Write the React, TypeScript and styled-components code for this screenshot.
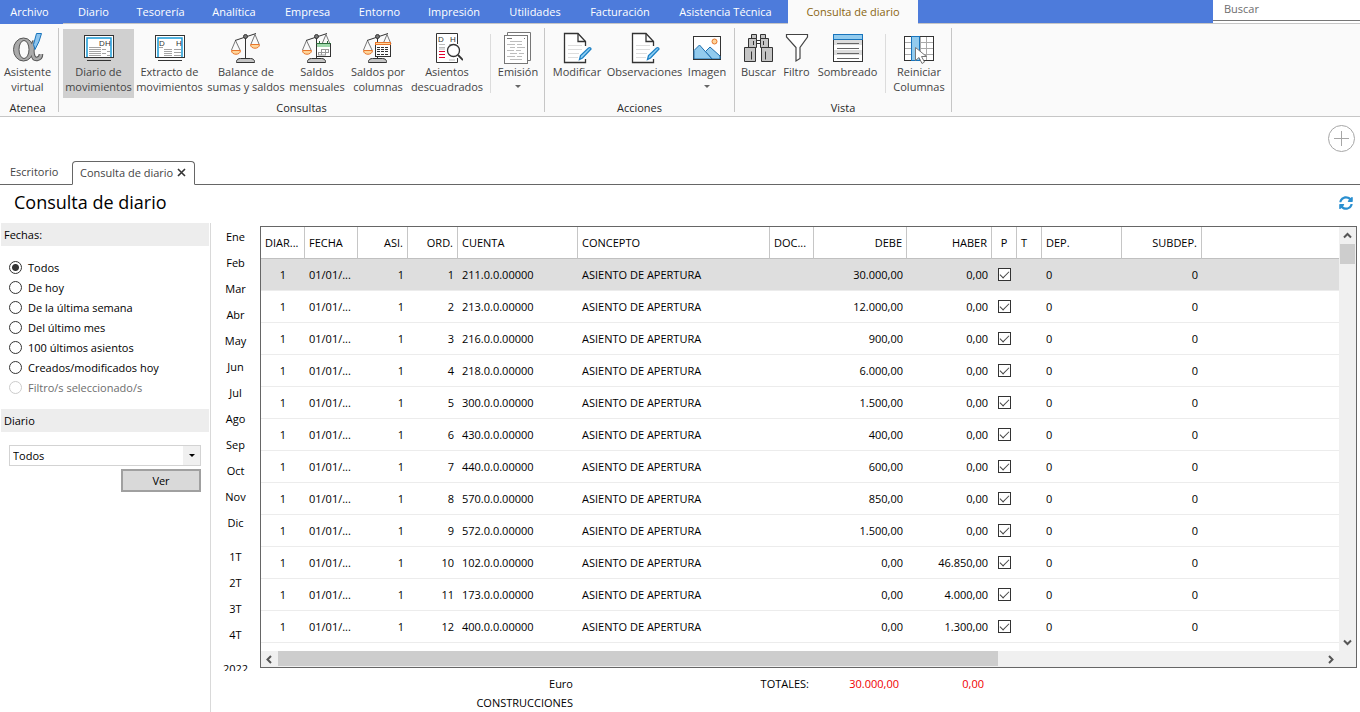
import React, { useState } from "react";
import styled, { createGlobalStyle, css } from "styled-components";
import { FaSyncAlt } from "react-icons/fa";

const GlobalStyle = createGlobalStyle`
  * { box-sizing: border-box; }
  body {
    margin: 0;
    background: #fff;
    color: #000;
    font: 11px/15px "Open Sans", "Noto Sans", sans-serif;
  }
  button, input, select { font: inherit; color: inherit; margin: 0; }
  button { background: none; border: 0; padding: 0; cursor: pointer; }
`;

const Page = styled.div`
  display: flex;
  flex-direction: column;
  height: 100vh;
  overflow: hidden;
`;

/* ---------- Menu bar ---------- */

const MenuBar = styled.nav`
  display: flex;
  flex: none;
  height: 24px;
  background: #4d7bdb;
`;

const MenuItem = styled.button<{ $width: number; $tone?: "file" | "active" }>`
  flex: none;
  width: ${(p) => p.$width}px;
  color: #fff;
  border-bottom: 1px solid #c6c6c6;
  ${(p) =>
    p.$tone === "file" &&
    css`
      padding-right: 4px;
      border-bottom-color: #4d7bdb;
    `}
  ${(p) =>
    p.$tone === "active" &&
    css`
      background: #fafafa;
      border-bottom-color: #fafafa;
      color: #8a6510;
    `}
`;

const MenuFill = styled.div`
  flex: 1;
  border-bottom: 1px solid #c6c6c6;
`;

const SearchBox = styled.div`
  width: 147px;
  background: #fff;
  border-bottom: 1px solid #c6c6c6;
`;

const SearchInput = styled.input`
  display: block;
  width: 100%;
  height: 21px;
  padding: 0 11px 3px;
  border: 0;
  border-bottom: 1px solid #777;
  outline: 0;
  background: #fff;
  &::placeholder { color: #6d6d6d; opacity: 1; }
`;

/* ---------- Ribbon ---------- */

const Ribbon = styled.div`
  display: flex;
  flex: none;
  height: 93px;
  background: #fafafa;
  border-bottom: 1px solid #c6c6c6;
`;

const Group = styled.section<{ $first?: boolean }>`
  display: flex;
  flex-direction: column;
  padding: ${(p) => (p.$first ? "5px 3px 0 0" : "5px 4px 0")};
`;

const GroupButtons = styled.div`
  display: flex;
  height: 69px;
`;

const GroupLabel = styled.div`
  margin-top: 2px;
  text-align: center;
  color: #262626;
`;

const GroupDivider = styled.div`
  width: 1px;
  margin: 4px 0;
  background: #c6c6c6;
`;

const Separator = styled.div`
  width: 1px;
  margin: 5px 5px;
  background: #dcdcdc;
`;

const ToolButton = styled.button<{ $width: number; $selected?: boolean }>`
  display: flex;
  flex-direction: column;
  align-items: center;
  flex: none;
  width: ${(p) => p.$width}px;
  padding-top: 3px;
  color: #444;
  background: ${(p) => (p.$selected ? "#d0d0d0" : "transparent")};
`;

const ToolText = styled.span`
  white-space: pre;
  text-align: center;
`;

const Caret = styled.span`
  margin-top: 6px;
  border: 3px solid transparent;
  border-top-color: #666;
  border-bottom: 0;
`;

/* ---------- Document tabs ---------- */

const QuickArea = styled.div`
  display: flex;
  flex: none;
  justify-content: flex-end;
  height: 44px;
  padding: 8px 5px 0;
`;

const AddButton = styled.button`
  display: block;
  width: 27px;
  height: 27px;
`;

const DocTabs = styled.div`
  display: flex;
  flex: none;
  height: 24px;
`;

const DocTab = styled.button<{ $active?: boolean }>`
  display: flex;
  align-items: center;
  gap: 4px;
  flex: none;
  width: ${(p) => (p.$active ? 123 : 72)}px;
  padding: 0 0 2px ${(p) => (p.$active ? 7 : 10)}px;
  color: #444;
  border-bottom: 1px solid #666;
  ${(p) =>
    p.$active &&
    css`
      border: 1px solid #666;
      border-bottom-color: #fff;
      border-radius: 4px 4px 0 0;
    `}
`;

const DocTabsFill = styled.div`
  flex: 1;
  border-bottom: 1px solid #666;
`;

const TitleRow = styled.header`
  display: flex;
  flex: none;
  align-items: center;
  justify-content: space-between;
  height: 38px;
  padding: 0 7px 2px 14px;
`;

const Title = styled.h1`
  margin: 0;
  padding-bottom: 2px;
  font-size: 18px;
  line-height: 24px;
  font-weight: 400;
`;

const RefreshButton = styled.button`
  display: block;
  height: 14px;
  color: #2a8fd0;
  svg { display: block; }
`;

/* ---------- Body ---------- */

const Body = styled.div`
  display: flex;
  flex: 1;
  min-height: 0;
`;

const Sidebar = styled.aside`
  flex: none;
  width: 211px;
  padding: 0 1px;
  border-right: 1px solid #d9d9d9;
`;

const SideHeading = styled.h2`
  margin: 0;
  height: 23px;
  padding: 0 3px;
  background: #ededed;
  font-size: 11px;
  line-height: 23px;
  font-weight: 400;
`;

const RadioList = styled.div`
  display: flex;
  flex-direction: column;
  padding: 11px 8px 12px;
`;

const RadioLabel = styled.label<{ $disabled?: boolean }>`
  display: flex;
  align-items: center;
  gap: 6px;
  height: 20px;
  color: ${(p) => (p.$disabled ? "#6d6d6d" : "#000")};
`;

const Radio = styled.input`
  appearance: none;
  width: 13px;
  height: 13px;
  border: 1px solid #333;
  border-radius: 50%;
  background: #fff;
  &:checked { background: radial-gradient(circle, #333 3px, #fff 4px); }
  &:disabled { border-color: #ccc; }
`;

const JournalForm = styled.div`
  display: flex;
  flex-direction: column;
  gap: 3px;
  padding: 13px 8px;
`;

const SelectBox = styled.div`
  display: grid;
  grid-template-columns: 1fr 17px;
  align-items: stretch;
  height: 21px;
  border: 1px solid #d3d3d3;
`;

const Select = styled.select`
  grid-area: 1 / 1 / 2 / 3;
  appearance: none;
  padding: 0 3px;
  border: 0;
  border-radius: 0;
  background: transparent;
`;

const SelectArrow = styled.span`
  grid-area: 1 / 2;
  display: flex;
  align-items: center;
  justify-content: center;
  background: #f0f0f0;
  pointer-events: none;
  &::after {
    content: "";
    border: 3px solid transparent;
    border-top-color: #000;
    border-bottom: 0;
  }
`;

const ViewButton = styled.button`
  align-self: flex-end;
  width: 80px;
  height: 23px;
  background: #d9d9d9;
  border: 2px solid #a0a0a0;
`;

const Main = styled.main`
  display: flex;
  flex-direction: column;
  flex: 1;
  min-width: 0;
`;

const Workspace = styled.div`
  display: flex;
  flex: 1;
  min-height: 0;
`;

const Periods = styled.nav`
  display: flex;
  flex-direction: column;
  gap: 8px;
  flex: none;
  width: 49px;
  overflow: hidden;
`;

const PeriodGroup = styled.div`
  display: flex;
  flex-direction: column;
  flex: none;
`;

const Period = styled.button`
  height: 26px;
`;

const GridFrame = styled.div`
  display: grid;
  grid-template-columns: minmax(0, 1fr) 17px;
  grid-template-rows: minmax(0, 1fr) 16px;
  flex: 1;
  min-width: 0;
  margin: 3px 3px 3px 0;
  border: 1px solid #666;
`;

const GridView = styled.div`
  overflow: hidden;
`;

const Table = styled.table`
  width: 100%;
  table-layout: fixed;
  border-collapse: separate;
  border-spacing: 0;
`;

type Align = "left" | "right" | "center";

const cell = css<{ $align?: Align }>`
  height: 32px;
  padding: 0 4px;
  overflow: hidden;
  white-space: nowrap;
  text-align: ${(p) => p.$align ?? "left"};
  font-weight: 400;
`;

const Th = styled.th<{ $align?: Align }>`
  ${cell}
  border-bottom: 1px solid #c0c0c0;
  border-right: 1px solid #c6c6c6;
  &:last-child { border-right: 0; }
`;

const Td = styled.td<{ $align?: Align }>`
  ${cell}
  border-bottom: 1px solid #ececec;
`;

const Row = styled.tr<{ $selected?: boolean }>`
  background: ${(p) => (p.$selected ? "#dedede" : "#fff")};
`;

const Tick = styled.input`
  appearance: none;
  display: block;
  width: 13px;
  height: 13px;
  margin: 0 auto;
  border: 1px solid #333;
  background: #fff;
  &:checked::after {
    content: "";
    display: block;
    width: 8px;
    height: 4px;
    margin: 2px 1px;
    border: solid #444;
    border-width: 0 0 1px 1px;
    transform: rotate(-45deg);
  }
`;

const VScroll = styled.div`
  grid-area: 1 / 2 / 3 / 3;
  display: flex;
  flex-direction: column;
  padding-bottom: 16px;
  background: #f0f0f0;
`;

const HScroll = styled.div`
  grid-area: 2 / 1;
  display: flex;
  background: #f0f0f0;
`;

const ScrollButton = styled.button`
  display: flex;
  align-items: center;
  justify-content: center;
  flex: none;
  width: 17px;
  height: 17px;
`;

const VThumb = styled.div`
  height: 20px;
  margin: 0 1px;
  background: #cdcdcd;
`;

const Track = styled.div`
  flex: 1;
`;

const HThumb = styled.div`
  width: 69%;
  height: 15px;
  background: #cdcdcd;
`;

const Footer = styled.footer`
  display: grid;
  grid-template-columns: 362px 236px 90px 85px;
  grid-auto-rows: 19px;
  align-content: start;
  flex: none;
  height: 41px;
  padding-top: 5px;
  text-align: right;
`;

const Amount = styled.output`
  color: #f00000;
`;

/* ---------- Icons ---------- */

const Icon = ({ children }: { children: React.ReactNode }) => (
  <svg width="32" height="32" viewBox="0 0 32 32" fill="none" aria-hidden="true">
    {children}
  </svg>
);

const AlphaIcon = () => {
  const stem = "M22.500 9C18.500 19 20.500 27.500 25 27C27.500 26.500 29 24.500 29 22";
  return (
    <Icon>
      <path d={stem} stroke="#555" strokeWidth="4.600" />
      <ellipse cx="11.500" cy="17.500" rx="10" ry="11.500" fill="#aaa" stroke="#555" />
      <ellipse cx="12" cy="17.500" rx="5" ry="9" fill="#fafafa" stroke="#555" />
      <path d={stem} stroke="#aaa" strokeWidth="2.600" />
      <path d="M24.500 1.500h5L27 9.500l-4 8-1.500-5z" fill="#8cc4ee" stroke="#1874bc" />
    </Icon>
  );
};

const LedgerIcon = ({ split }: { split?: boolean }) => (
  <Icon>
    <rect x="1.500" y="3.500" width="29" height="22" fill="#fff" stroke="#333" />
    <path d="M4 25V6h24v19" stroke="#1a9ad6" strokeWidth="1.500" />
    <text x={split ? 5 : 16} y="14" fontSize="8" fontFamily="Liberation Sans, sans-serif" fill="#333">D</text>
    <text x="22" y="14" fontSize="8" fontFamily="Liberation Sans, sans-serif" fill="#333">H</text>
    <path
      d={split
        ? "M5 15.500h4M10 17.500h8M10 19.500h8M10 21.500h8M10 23.500h8M20 17.500h7M20 20.500h7M20 23.500h7"
        : "M6 15.500h12M6 17.500h12M6 19.500h12M6 21.500h12M6 23.500h12M19 17.500h4M24 19.500h3M19 21.500h4M24 23.500h3"}
      stroke="#a3a3a3"
    />
    <path d="M4 28.500h24" stroke="#333" />
  </Icon>
);

const ScaleBase = ({ rightPan }: { rightPan?: boolean }) => (
  <>
    <path d="M5.500 8.500L1.500 18M5.500 8.500L10 18M25 2.500L21 12M25 2.500L29 12" stroke="#777" />
    <path d="M5 8.500L26 1.500M15.500 5v21" stroke="#333" />
    <circle cx="15.500" cy="4.500" r="2" fill="#777" stroke="#333" />
    <path d="M1.500 18.500h9c0 5-9 5-9 0z" fill="#ffd59a" stroke="#e8762c" />
    {rightPan && <path d="M20.500 12.500h9c0 5-9 5-9 0z" fill="#ffd59a" stroke="#e8762c" />}
    <path d="M6.500 30.500v-1c0-2 2-3 4-3h10c2 0 4 1 4 3v1z" fill="#c4c4c4" stroke="#333" />
  </>
);

const BalanceIcon = () => <Icon><ScaleBase rightPan /></Icon>;

const MonthlyIcon = () => (
  <Icon>
    <ScaleBase />
    <rect x="15.500" y="11.500" width="14" height="13" fill="#fff" stroke="#333" />
    <rect x="16" y="12" width="13" height="3" fill="#9fd8ab" />
    <path d="M15 11.500h15M18.500 9v3M26.500 9v3" stroke="#2d6b3c" />
    <path d="M20 17.500h8M17 20.500h11M17 23h8M17.500 20v3M20.500 17v6M24.500 17v6M27.500 17v4" stroke="#999" />
  </Icon>
);

const ColumnsBalanceIcon = () => (
  <Icon>
    <ScaleBase />
    <rect x="13.500" y="12.500" width="15" height="12" fill="#fff" stroke="#333" />
    <rect x="13.500" y="10.500" width="15" height="2" fill="#ffd59a" stroke="#e8762c" />
    <path d="M15 15.500h12M15 17.500h12M15 19.500h12M15 22.500h12" stroke="#333" strokeDasharray="3 1" />
  </Icon>
);

const UnbalancedIcon = () => (
  <Icon>
    <path d="M26.500 12V1.500h-21v29h21V26" fill="#fff" stroke="#333" />
    <text x="7" y="10" fontSize="8" fontFamily="Liberation Sans, sans-serif" fill="#333">D</text>
    <text x="19" y="10" fontSize="8" fontFamily="Liberation Sans, sans-serif" fill="#333">H</text>
    <path d="M8 12.500h6M8 15.500h6M8 17h6M18 12.500h6M18 28h6" stroke="#bbb" />
    <path d="M8 19.500h6M8 22.500h6M8 25.500h6" stroke="#e2002d" />
    <circle cx="22.500" cy="18.500" r="6" fill="#fff" stroke="#333" strokeWidth="1.300" />
    <path d="M27 23l5 5" stroke="#333" strokeWidth="1.800" />
  </Icon>
);

const EmissionIcon = () => (
  <Icon>
    <path d="M5.500 3V.500h23v28H26" fill="#fff" stroke="#777" />
    <rect x="2.500" y="3.500" width="23" height="28" fill="#fff" stroke="#777" />
    <path d="M5 6.500h5M22 6.500h1" stroke="#777" />
    <path d="M8 9.500h12M5 12.500h8M15 12.500h5M8 15.500h5M15 15.500h8M5 18.500h7M14 18.500h5M8 21.500h7M17 21.500h5M5 24.500h8M15 24.500h5M8 27.500h12" stroke="#bdbdbd" />
  </Icon>
);

const EditIcon = () => (
  <Icon>
    <path d="M24.500 14V9.500L17 1.500H3.500v29h21V27" fill="#fff" stroke="#333" strokeWidth="1.300" />
    <path d="M17 1.500v8h7.500" stroke="#333" strokeWidth="1.300" />
    <path d="M7 13.500h14M7 17.500h14M7 21.500h11M7 25.500h10" stroke="#ddd" />
    <path d="M18.500 27.500l1-4L27.500 16q2-1 2.500 1l-8.500 9z" fill="#8fd0f5" stroke="#1d80c4" strokeWidth="1.300" />
  </Icon>
);

const ImageIcon = () => (
  <Icon>
    <rect x="2.500" y="4.500" width="27" height="23" fill="#fff" stroke="#333" />
    <circle cx="23.500" cy="9.500" r="2.500" fill="#ffd59a" stroke="#e8762c" />
    <path d="M14.500 19.500l4.500-4.500 10 9v3H21z" fill="#92cbee" stroke="#1f6fae" />
    <path d="M3 18.500l5.500-5.500L21 27H3z" fill="#92cbee" stroke="#1f6fae" />
    <path d="M2 27.500h28" stroke="#333" />
  </Icon>
);

const BinocularsIcon = () => (
  <Icon>
    <path d="M8.500 2.500h5v4h-5zM17.500 2.500h5v4h-5z" fill="#c4c4c4" stroke="#333" />
    <path d="M12 8.500h7v3h-7z" fill="#fff" stroke="#333" />
    <path d="M5.500 6.500h8v9h-8zM17.500 6.500h8v9h-8z" fill="#c4c4c4" stroke="#333" />
    <path d="M1.500 15.500h11v14h-11zM18.500 15.500h11v14h-11z" fill="#c4c4c4" stroke="#333" />
    <path d="M10.500 9v4M20.500 9v4M8.500 19.500v8M22.500 19.500v8" stroke="#333" />
  </Icon>
);

const FunnelIcon = () => (
  <Icon>
    <path d="M5.500 2.500h21V5l-7.500 10.500v11l-4 2.500V15.500L5.500 5z" fill="#fff" stroke="#444" strokeWidth="1.200" />
  </Icon>
);

const ShadingIcon = () => (
  <Icon>
    <rect x="1.500" y="2.500" width="29" height="27" fill="#fff" stroke="#333" />
    <path d="M2 8h28v5H2zM2 18h28v5H2z" fill="#ddd" />
    <rect x="1.500" y="2.500" width="29" height="5" fill="#92cbee" stroke="#1874bc" />
    <path d="M5 11.500h22M5 16.500h22M5 21.500h22M5 26.500h22" stroke="#666" />
  </Icon>
);

const ResetColumnsIcon = () => (
  <Icon>
    <rect x="1.500" y="4.500" width="29" height="24" fill="#fff" stroke="#333" />
    <path d="M2 10.500h28M2 16.500h28M2 22.500h28M17.500 5v23M23.500 5v23" stroke="#aaa" />
    <rect x="8.500" y="4.500" width="8" height="24" fill="#92cbee" stroke="#1874bc" />
    <path d="M12.500 15.500v13l3.500-3 3 6 2.500-1.500-3-5.500h5z" fill="#fff" stroke="#777" />
  </Icon>
);

const Chevron = ({ d }: { d: string }) => (
  <svg width="9" height="9" viewBox="0 0 9 9" fill="none" aria-hidden="true">
    <path d={d} stroke="#555" strokeWidth="2" />
  </svg>
);

/* ---------- Data ---------- */

const menus: [string, number][] = [
  ["Diario", 61], ["Tesorería", 73], ["Analítica", 74], ["Empresa", 73],
  ["Entorno", 71], ["Impresión", 78], ["Utilidades", 84], ["Facturación", 86],
  ["Asistencia Técnica", 125],
];

const dateFilters = [
  "Todos", "De hoy", "De la última semana", "Del último mes",
  "100 últimos asientos", "Creados/modificados hoy", "Filtro/s seleccionado/s",
];

const periods = [
  ["Ene", "Feb", "Mar", "Abr", "May", "Jun", "Jul", "Ago", "Sep", "Oct", "Nov", "Dic"],
  ["1T", "2T", "3T", "4T"],
  ["2022"],
];

const columns: { label: string; width?: number; align?: Align }[] = [
  { label: "DIAR...", width: 44 },
  { label: "FECHA", width: 53 },
  { label: "ASI.", width: 50, align: "right" },
  { label: "ORD.", width: 50, align: "right" },
  { label: "CUENTA", width: 120 },
  { label: "CONCEPTO", width: 192 },
  { label: "DOC...", width: 44 },
  { label: "DEBE", width: 93, align: "right" },
  { label: "HABER", width: 85, align: "right" },
  { label: "P", width: 25, align: "center" },
  { label: "T", width: 25 },
  { label: "DEP.", width: 80 },
  { label: "SUBDEP.", width: 80, align: "right" },
  { label: "" },
];

const entries: [string, string, string][] = [
  ["211.0.0.00000", "30.000,00", "0,00"],
  ["213.0.0.00000", "12.000,00", "0,00"],
  ["216.0.0.00000", "900,00", "0,00"],
  ["218.0.0.00000", "6.000,00", "0,00"],
  ["300.0.0.00000", "1.500,00", "0,00"],
  ["430.0.0.00000", "400,00", "0,00"],
  ["440.0.0.00000", "600,00", "0,00"],
  ["570.0.0.00000", "850,00", "0,00"],
  ["572.0.0.00000", "1.500,00", "0,00"],
  ["102.0.0.00000", "0,00", "46.850,00"],
  ["173.0.0.00000", "0,00", "4.000,00"],
  ["400.0.0.00000", "0,00", "1.300,00"],
];

type ToolProps = {
  icon: React.ReactNode;
  label: string;
  width: number;
  selected?: boolean;
  menu?: boolean;
};

const Tool = ({ icon, label, width, selected, menu }: ToolProps) => (
  <ToolButton type="button" $width={width} $selected={selected}>
    {icon}
    <ToolText>{label}</ToolText>
    {menu && <Caret />}
  </ToolButton>
);

export default function App() {
  const [filter, setFilter] = useState(0);
  const [selected, setSelected] = useState(0);

  return (
    <Page>
      <GlobalStyle />
      <MenuBar>
        <MenuItem type="button" $width={63} $tone="file">Archivo</MenuItem>
        {menus.map(([label, width]) => (
          <MenuItem type="button" key={label} $width={width}>{label}</MenuItem>
        ))}
        <MenuItem type="button" $width={130} $tone="active">Consulta de diario</MenuItem>
        <MenuFill />
        <SearchBox>
          <SearchInput type="text" placeholder="Buscar" aria-label="Buscar" />
        </SearchBox>
      </MenuBar>

      <Ribbon>
        <Group $first>
          <GroupButtons>
            <Tool icon={<AlphaIcon />} label={"Asistente\nvirtual"} width={55} />
          </GroupButtons>
          <GroupLabel>Atenea</GroupLabel>
        </Group>
        <GroupDivider />
        <Group>
          <GroupButtons>
            <Tool icon={<LedgerIcon />} label={"Diario de\nmovimientos"} width={71} selected />
            <Tool icon={<LedgerIcon split />} label={"Extracto de\nmovimientos"} width={71} />
            <Tool icon={<BalanceIcon />} label={"Balance de\nsumas y saldos"} width={82} />
            <Tool icon={<MonthlyIcon />} label={"Saldos\nmensuales"} width={60} />
            <Tool icon={<ColumnsBalanceIcon />} label={"Saldos por\ncolumnas"} width={62} />
            <Tool icon={<UnbalancedIcon />} label={"Asientos\ndescuadrados"} width={76} />
            <Separator />
            <Tool icon={<EmissionIcon />} label="Emisión" width={44} menu />
          </GroupButtons>
          <GroupLabel>Consultas</GroupLabel>
        </Group>
        <GroupDivider />
        <Group>
          <GroupButtons>
            <Tool icon={<EditIcon />} label="Modificar" width={56} />
            <Tool icon={<EditIcon />} label="Observaciones" width={79} />
            <Tool icon={<ImageIcon />} label="Imagen" width={46} menu />
          </GroupButtons>
          <GroupLabel>Acciones</GroupLabel>
        </Group>
        <GroupDivider />
        <Group>
          <GroupButtons>
            <Tool icon={<BinocularsIcon />} label="Buscar" width={39} />
            <Tool icon={<FunnelIcon />} label="Filtro" width={37} />
            <Tool icon={<ShadingIcon />} label="Sombreado" width={65} />
            <Separator />
            <Tool icon={<ResetColumnsIcon />} label={"Reiniciar\nColumnas"} width={56} />
          </GroupButtons>
          <GroupLabel>Vista</GroupLabel>
        </Group>
        <GroupDivider />
      </Ribbon>

      <QuickArea>
        <AddButton type="button" aria-label="Añadir">
          <svg width="27" height="27" viewBox="0 0 27 27" fill="none" stroke="#a6a6a6">
            <circle cx="13.500" cy="13.500" r="13" />
            <path d="M13.500 6v15M6 13.500h15" />
          </svg>
        </AddButton>
      </QuickArea>

      <DocTabs>
        <DocTab type="button">Escritorio</DocTab>
        <DocTab type="button" $active>
          Consulta de diario
          <svg width="9" height="9" viewBox="0 0 9 9" aria-hidden="true">
            <path d="M1 1l7 7M8 1l-7 7" stroke="#333" strokeWidth="1.600" />
          </svg>
        </DocTab>
        <DocTabsFill />
      </DocTabs>

      <TitleRow>
        <Title>Consulta de diario</Title>
        <RefreshButton type="button" aria-label="Actualizar">
          <FaSyncAlt size={14} />
        </RefreshButton>
      </TitleRow>

      <Body>
        <Sidebar>
          <SideHeading>Fechas:</SideHeading>
          <RadioList role="radiogroup" aria-label="Fechas">
            {dateFilters.map((label, i) => {
              const disabled = i === dateFilters.length - 1;
              return (
                <RadioLabel key={label} $disabled={disabled}>
                  <Radio
                    type="radio"
                    name="fechas"
                    checked={filter === i}
                    disabled={disabled}
                    onChange={() => setFilter(i)}
                  />
                  {label}
                </RadioLabel>
              );
            })}
          </RadioList>
          <SideHeading>
            <label htmlFor="diario">Diario</label>
          </SideHeading>
          <JournalForm>
            <SelectBox>
              <SelectArrow />
              <Select id="diario" defaultValue="Todos">
                <option>Todos</option>
              </Select>
            </SelectBox>
            <ViewButton type="button">Ver</ViewButton>
          </JournalForm>
        </Sidebar>

        <Main>
          <Workspace>
            <Periods>
              {periods.map((group) => (
                <PeriodGroup key={group[0]}>
                  {group.map((p) => <Period type="button" key={p}>{p}</Period>)}
                </PeriodGroup>
              ))}
            </Periods>
            <GridFrame>
              <GridView>
                <Table>
                  <colgroup>
                    {columns.map((c) => <col key={c.label} width={c.width} />)}
                  </colgroup>
                  <thead>
                    <tr>
                      {columns.map((c) => <Th key={c.label} $align={c.align}>{c.label}</Th>)}
                    </tr>
                  </thead>
                  <tbody>
                    {entries.map(([account, debit, credit], i) => (
                      <Row key={account} $selected={i === selected} onClick={() => setSelected(i)}>
                        <Td $align="center">1</Td>
                        <Td>01/01/...</Td>
                        <Td $align="right">1</Td>
                        <Td $align="right">{i + 1}</Td>
                        <Td>{account}</Td>
                        <Td>ASIENTO DE APERTURA</Td>
                        <Td />
                        <Td $align="right">{debit}</Td>
                        <Td $align="right">{credit}</Td>
                        <Td $align="center">
                          <Tick type="checkbox" defaultChecked aria-label={`P ${i + 1}`} />
                        </Td>
                        <Td />
                        <Td>0</Td>
                        <Td $align="right">0</Td>
                        <Td />
                      </Row>
                    ))}
                  </tbody>
                </Table>
              </GridView>
              <VScroll>
                <ScrollButton type="button" aria-label="Subir"><Chevron d="M1 6.500l3.500-3.500L8 6.500" /></ScrollButton>
                <VThumb />
                <Track />
                <ScrollButton type="button" aria-label="Bajar"><Chevron d="M1 2.500l3.500 3.500L8 2.500" /></ScrollButton>
              </VScroll>
              <HScroll>
                <ScrollButton type="button" aria-label="Izquierda"><Chevron d="M6 1L2.500 4.500 6 8" /></ScrollButton>
                <Track><HThumb /></Track>
                <ScrollButton type="button" aria-label="Derecha"><Chevron d="M3 1l3.500 3.500L3 8" /></ScrollButton>
              </HScroll>
            </GridFrame>
          </Workspace>
          <Footer>
            <span>Euro</span>
            <span>TOTALES:</span>
            <Amount>30.000,00</Amount>
            <Amount>0,00</Amount>
            <span>CONSTRUCCIONES</span>
          </Footer>
        </Main>
      </Body>
    </Page>
  );
}
